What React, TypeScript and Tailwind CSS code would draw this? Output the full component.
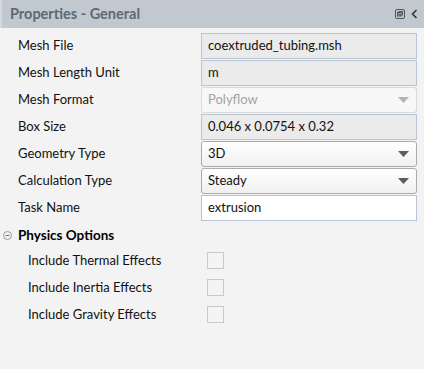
import React from 'react';

const font = { fontFamily: 'Lato, "Noto Sans", sans-serif' };

function Arrow({ disabled }: { disabled?: boolean }) {
  return (
    <svg width="11" height="6" viewBox="0 0 11 6" className="ml-auto mr-[7px]">
      <path d="M0 0 H11 L5.5 6 Z" fill={disabled ? '#b4b4b4' : '#5c5c5c'} />
    </svg>
  );
}

function Row({ label, children }: { label: string; children: React.ReactNode }) {
  return (
    <div className="flex items-center h-[27px]">
      <div className="w-[199px] pl-[16px] text-[13px] text-[#111]">{label}</div>
      <div className="w-[216px]">{children}</div>
    </div>
  );
}

function ReadOnly({ value }: { value: string }) {
  return (
    <div className="h-[26px] flex items-center px-[6px] border border-[#b9c5d3] bg-[#ebebeb] text-[13px] text-[#111]">
      {value}
    </div>
  );
}

function Select({ value, disabled }: { value: string; disabled?: boolean }) {
  return (
    <div
      className={
        disabled
          ? 'h-[26px] flex items-center pl-[6px] rounded-[3px] border border-[#dadada] bg-[#f7f7f7] text-[13px] text-[#a3a3a3]'
          : 'h-[26px] flex items-center pl-[6px] rounded-[3px] border border-[#acacac] bg-gradient-to-b from-[#ffffff] to-[#f0f0f0] text-[13px] text-[#111]'
      }
    >
      {value}
      <Arrow disabled={disabled} />
    </div>
  );
}

function Check({ label }: { label: string }) {
  return (
    <div className="flex items-center h-[27px]">
      <div className="w-[205px] pl-[26px] text-[13px] text-[#111]">{label}</div>
      <div className="w-[17px] h-[17px] border border-[#c9c9c9] bg-[#f4f4f4]" />
    </div>
  );
}

export default function App() {
  return (
    <div className="w-[424px] h-[369px] bg-[#f3f3f3] flex flex-col overflow-hidden" style={font}>
      {/* title bar */}
      <div className="h-[28px] bg-[#c2c8d0] flex items-center pl-[8px] pr-[6px] border-l-2 border-[#d4d9df]">
        <span className="text-[14.5px] font-bold text-[#5d6874]">Properties - General</span>
        <svg width="10" height="10" viewBox="0 0 10 10" className="ml-auto mr-[6px]">
          <rect x="0.5" y="0.5" width="9" height="9" rx="1.5" fill="none" stroke="#555" />
          <rect x="2.5" y="3.5" width="3.5" height="3.5" fill="none" stroke="#555" />
          <rect x="4" y="2.5" width="3.5" height="3.5" fill="none" stroke="#555" />
        </svg>
        <svg width="7" height="10" viewBox="0 0 7 10">
          <path d="M5.5 1 L1.5 5 L5.5 9" fill="none" stroke="#333" strokeWidth="1.6" />
        </svg>
      </div>

      <div className="flex flex-col pt-[4px] pl-[2px]">
        <Row label="Mesh File"><ReadOnly value="coextruded_tubing.msh" /></Row>
        <Row label="Mesh Length Unit"><ReadOnly value="m" /></Row>
        <Row label="Mesh Format"><Select value="Polyflow" disabled /></Row>
        <Row label="Box Size"><ReadOnly value="0.046 x 0.0754 x 0.32" /></Row>
        <Row label="Geometry Type"><Select value="3D" /></Row>
        <Row label="Calculation Type"><Select value="Steady" /></Row>
        <Row label="Task Name">
          <div className="h-[26px] flex items-center px-[6px] border border-[#b9c5d3] bg-white text-[13px] text-[#111]">
            extrusion
          </div>
        </Row>

        <div className="flex items-center h-[24px] mt-[2px]">
          <svg width="9" height="9" viewBox="0 0 9 9" className="ml-[1px] mr-[6px]">
            <circle cx="4.5" cy="4.5" r="4" fill="#f3f3f3" stroke="#9a9a9a" />
            <path d="M2.5 4.5 H6.5" stroke="#707070" />
          </svg>
          <span className="text-[13.5px] font-bold text-black">Physics Options</span>
        </div>
        <div className="flex flex-col">
          <Check label="Include Thermal Effects" />
          <Check label="Include Inertia Effects" />
          <Check label="Include Gravity Effects" />
        </div>
      </div>
    </div>
  );
}
